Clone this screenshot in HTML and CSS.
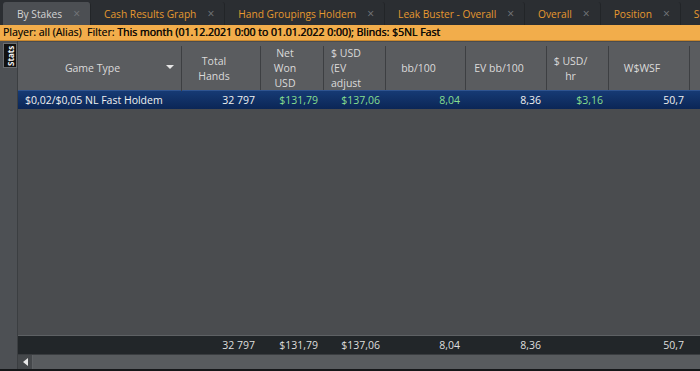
FILE: index.html
```html
<!DOCTYPE html>
<html lang="en">
  <head>
    <meta charset="UTF-8" />
    <title>By Stakes</title>
    <link rel="stylesheet" href="styles.css">
  </head>
  <body>
    <div class="tabs">
      <div class="tab active">By Stakes<span class="x">×</span></div>
      <div class="tab">Cash Results Graph<span class="x">×</span></div>
      <div class="tab">Hand Groupings Holdem<span class="x">×</span></div>
      <div class="tab">Leak Buster - Overall<span class="x">×</span></div>
      <div class="tab">Overall<span class="x">×</span></div>
      <div class="tab">Position<span class="x">×</span></div>
      <div class="tab">Session<span class="x">×</span></div>
    </div>
    <div class="filter">
      Player: all (Alias)&nbsp; Filter: <b>This month (01.12.2021 0:00 to 01.01.2022 0:00); Blinds: $5NL Fast</b>
    </div>
    <div class="workspace">
      <div class="sidebar">
        <div class="side-tab">Stats</div>
      </div>
      <div class="report">
        <div class="cols head">
          <div class="hc gtype">Game Type<span class="sort"></span></div>
          <div class="hc">Total<br>Hands</div>
          <div class="hc">Net<br>Won<br>USD</div>
          <div class="hc left">$ USD<br>(EV<br>adjust</div>
          <div class="hc">bb/100</div>
          <div class="hc">EV bb/100</div>
          <div class="hc">$ USD/<br>hr</div>
          <div class="hc">W$WSF</div>
          <div class="hc"></div>
        </div>
        <div class="body">
          <div class="cols row selected">
            <div class="c name">$0,02/$0,05 NL Fast Holdem</div>
            <div class="c">32 797</div>
            <div class="c pos">$131,79</div>
            <div class="c pos">$137,06</div>
            <div class="c pos">8,04</div>
            <div class="c">8,36</div>
            <div class="c pos">$3,16</div>
            <div class="c">50,7</div>
            <div class="c"></div>
          </div>
        </div>
        <div class="cols row total">
          <div class="c name"></div>
          <div class="c">32 797</div>
          <div class="c">$131,79</div>
          <div class="c">$137,06</div>
          <div class="c">8,04</div>
          <div class="c">8,36</div>
          <div class="c"></div>
          <div class="c">50,7</div>
          <div class="c"></div>
        </div>
        <div class="hscroll">
          <div class="arrow"></div>
          <div class="track"></div>
        </div>
      </div>
    </div>
    <div class="edge"></div>
  </body>
</html>
```

FILE: styles.css
```css
* {
  margin: 0;
  padding: 0;
  box-sizing: border-box;
}
body {
  width: 700px;
  height: 371px;
  overflow: hidden;
  background-color: #2b2e32;
  font-family: "Open Sans", "Noto Sans", sans-serif;
  font-size: 10.5px;
}

/* tab strip */
.tabs {
  display: flex;
  height: 25px;
  padding-left: 3px;
  white-space: nowrap;
  overflow: hidden;
  font-size: 10.2px;
}
.tab {
  display: flex;
  align-items: center;
  gap: 11px;
  padding: 0 10px 0 13px;
  margin-top: 2px;
  color: #e6992f;
  border-right: 1px solid #222528;
  border-radius: 3px 3px 0 0;
}
.tab.active {
  background-color: #4c4f53;
  color: #d4d4d4;
  padding-left: 14px;
}
.x {
  color: #75787c;
  font-size: 12px;
}

/* filter line */
.filter {
  height: 16px;
  line-height: 15px;
  padding-left: 3px;
  background-color: #f2ad4b;
  border-bottom: 1px solid #c9882e;
  color: #0c0a06;
  white-space: nowrap;
  overflow: hidden;
  text-shadow: 0.3px 0 0 rgba(0, 0, 0, 0.5);
}
.filter b {
  font-weight: 400;
  text-shadow: 0.4px 0 0 #000;
}

.workspace {
  display: flex;
  height: 328px;
}
.sidebar {
  width: 18px;
  background-color: #4d5054;
  border-right: 1px solid #3b3e41;
  padding: 2px 0 0 3px;
}
.side-tab {
  writing-mode: vertical-rl;
  transform: rotate(180deg);
  width: 14px;
  height: 25px;
  background-color: #111;
  color: #f2f2f2;
  font-size: 8px;
  font-weight: 700;
  line-height: 14px;
  text-align: center;
  border: 1px solid #6a6d70;
}

.report {
  flex: 1;
  display: flex;
  flex-direction: column;
  overflow: hidden;
}
.cols {
  display: grid;
  grid-template-columns: 164px 79px 63px 62px 80px 81px 62px 81px 80px;
}

/* header */
.head {
  height: 49px;
  background-color: #5a5c5f;
  border-top: 1px solid #4a4c4f;
  color: #dadada;
  line-height: 15px;
}
.hc {
  display: flex;
  align-items: center;
  justify-content: center;
  text-align: center;
  padding-right: 14px;
  border-right: 1px solid #3d3f42;
  margin: 4px 0 3px;
}
.hc.left {
  justify-content: flex-start;
  text-align: left;
  padding-left: 7px;
}
.gtype {
  position: relative;
}
.sort {
  position: absolute;
  right: 7px;
  top: 19px;
  border-left: 4px solid transparent;
  border-right: 4px solid transparent;
  border-top: 4px solid #e6e6e6;
}

/* rows */
.body {
  flex: 1;
  background-color: #4a4c4f;
}
.row {
  height: 19px;
  line-height: 18px;
}
.c {
  text-align: right;
  padding-right: 6px;
  white-space: nowrap;
}
.c.name {
  text-align: left;
  padding-left: 7px;
}
.selected {
  background: linear-gradient(#163a74, #0b2656);
  border-top: 1px solid #2f5490;
  color: #f0f0f0;
}
.pos {
  color: #86df8f;
}
.total {
  height: 19px;
  background-color: #222629;
  border-top: 1px solid #5e6164;
  color: #dedede;
}

/* scrollbar */
.hscroll {
  display: flex;
  height: 15px;
  background-color: #4c4f52;
  border-top: 1px solid #3a3d40;
}
.arrow {
  width: 15px;
  display: flex;
  align-items: center;
  justify-content: center;
  background-color: #45484b;
  border-right: 1px solid #5f6265;
}
.arrow::before {
  content: "";
  border-top: 4px solid transparent;
  border-bottom: 4px solid transparent;
  border-right: 5px solid #e8e8e8;
}
.track {
  flex: 1;
  background-color: #585b5e;
}

.edge {
  height: 2px;
  background-color: #151719;
}
```
